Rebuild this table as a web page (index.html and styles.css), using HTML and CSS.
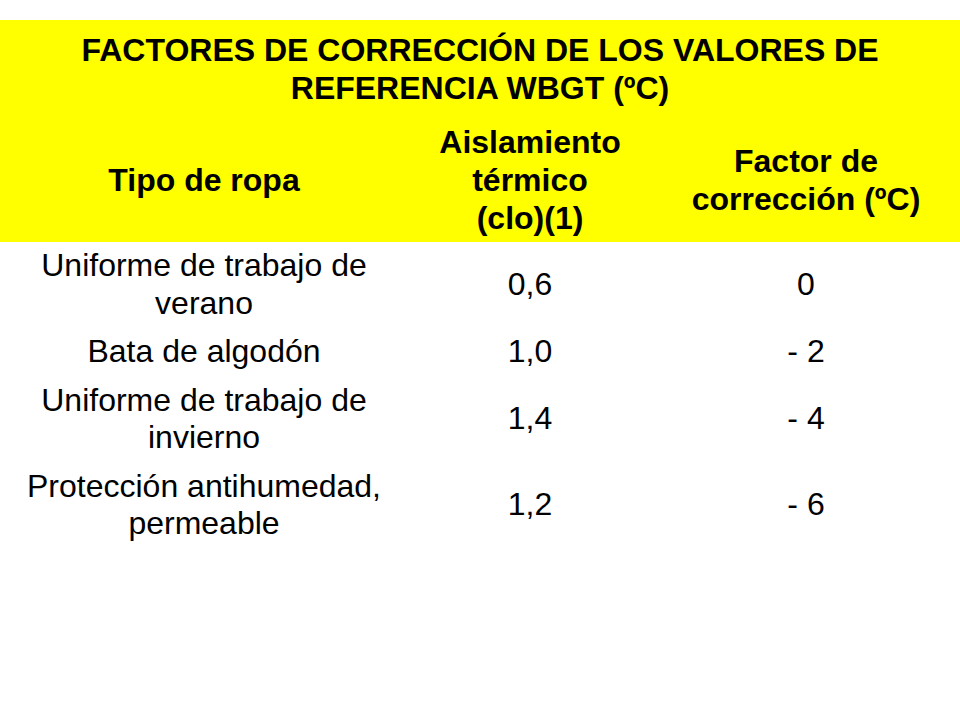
FILE: index.html
```html
<!DOCTYPE html>
<html lang="es">
<head>
<meta charset="utf-8">
<title>Factores de corrección WBGT</title>
<link rel="stylesheet" href="styles.css">
</head>
<body>
<div class="slide">
  <header class="head">
    <h1 class="title">FACTORES DE CORRECCIÓN DE LOS VALORES DE<br>REFERENCIA WBGT (ºC)</h1>
    <div class="row head-row">
      <div class="cell">Tipo de ropa</div>
      <div class="cell">Aislamiento<br>térmico<br>(clo)(1)</div>
      <div class="cell">Factor de<br>corrección (ºC)</div>
    </div>
  </header>
  <div class="body">
    <div class="row">
      <div class="cell">Uniforme de trabajo de<br>verano</div>
      <div class="cell">0,6</div>
      <div class="cell">0</div>
    </div>
    <div class="row">
      <div class="cell">Bata de algodón</div>
      <div class="cell">1,0</div>
      <div class="cell">- 2</div>
    </div>
    <div class="row">
      <div class="cell">Uniforme de trabajo de<br>invierno</div>
      <div class="cell">1,4</div>
      <div class="cell">- 4</div>
    </div>
    <div class="row">
      <div class="cell">Protección antihumedad,<br>permeable</div>
      <div class="cell">1,2</div>
      <div class="cell">- 6</div>
    </div>
  </div>
</div>
</body>
</html>
```
FILE: styles.css
```css
html, body {
  margin: 0;
  padding: 0;
  background: #ffffff;
}
body {
  font-family: "Liberation Sans", Arial, sans-serif;
  color: #000000;
  font-size: 32px;
}
.slide {
  width: 960px;
  height: 720px;
  padding-top: 20px;
  box-sizing: border-box;
}
.head {
  background: #ffff00;
  padding: 12px 0 4.5px;
}
.title {
  margin: 0;
  font-size: 32px;
  font-weight: bold;
  line-height: 37.5px;
  text-align: center;
}
.row {
  display: grid;
  grid-template-columns: 408px 244px 1fr;
  align-items: center;
  text-align: center;
}
.head-row {
  margin-top: 16px;
  font-weight: bold;
  line-height: 38px;
}
.body .row {
  line-height: 37.5px;
  padding: 5.5px 0;
}
.cell {
  padding: 0 4px;
}
```
